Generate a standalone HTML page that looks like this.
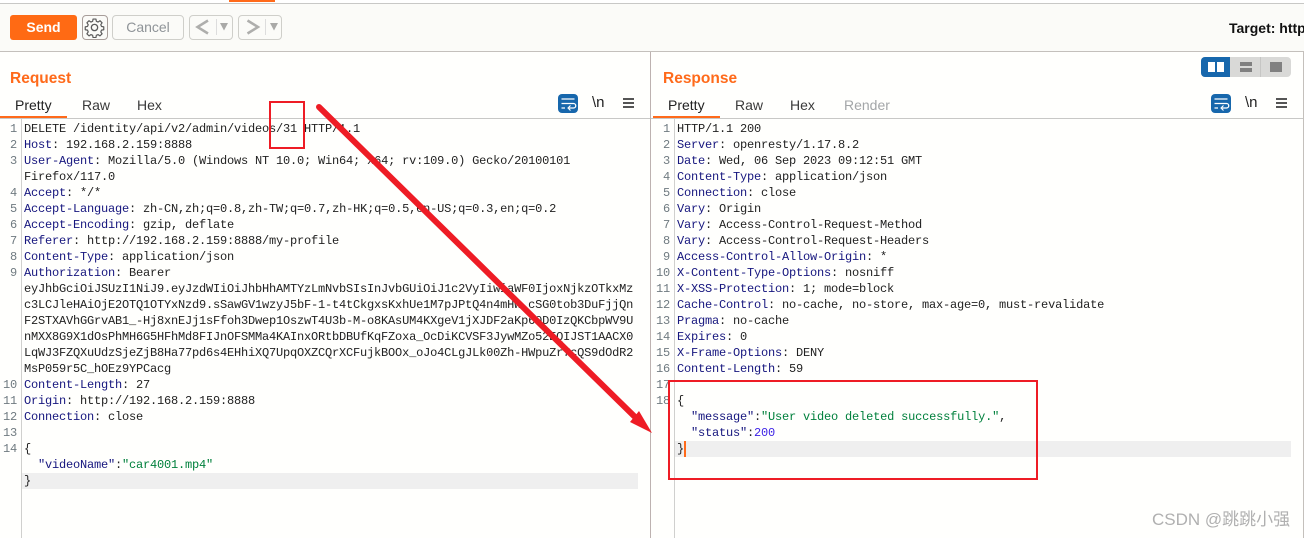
<!DOCTYPE html>
<html><head><meta charset="utf-8"><style>
html,body{margin:0;padding:0}
body{width:1304px;height:538px;overflow:hidden;background:#fffffd;position:relative;font-family:"Liberation Sans",sans-serif}
.a{position:absolute}
.l{position:absolute;font:12px/16px "Liberation Mono","Noto Sans CJK SC",monospace;letter-spacing:-.2px;color:#222;white-space:pre;height:16px}
.n{position:absolute;font:12px/16px "Liberation Mono",monospace;letter-spacing:-.2px;color:#6f7a80;text-align:right;width:16px}
.k{color:#16167e}.s{color:#00803c}.d{color:#3a1fe6}
.tab{position:absolute;top:97px;font-size:14px;line-height:17px;color:#3a3a3a}
.h{position:absolute;top:70px;font-size:15.5px;font-weight:bold;line-height:18px;color:#ff6a1a}
.b{position:absolute;top:15px;height:23px;border:1px solid #cfcfca;border-radius:4px;box-sizing:content-box}
</style></head><body>
<div class="a" style="left:0;top:0;width:1304px;height:51px;background:#fbfbf8"></div>
<div class="a" style="left:0;top:0;width:1304px;height:3px;background:#fff"></div>
<div class="a" style="left:0;top:3px;width:1304px;height:1px;background:#c8c8c6"></div>
<div class="a" style="left:229px;top:0;width:46px;height:2px;background:#ff6a1a"></div>
<div class="a" style="left:0;top:51px;width:1304px;height:1px;background:#c4c0bc"></div>
<div class="a" style="left:1303px;top:52px;width:1px;height:486px;background:#c4c0bc"></div>
<div class="a" style="left:650px;top:52px;width:1px;height:486px;background:#bdb2b0"></div>

<div class="a" style="left:10px;top:15px;width:67px;height:25px;background:#ff6a14;border-radius:3px;color:#fff;font-size:14px;font-weight:bold;text-align:center;line-height:25px">Send</div>
<div class="b" style="left:82px;width:24px;border-color:#a89e9a"></div>
<svg class="a" style="left:84px;top:17px" width="21" height="21" viewBox="0 0 24 24" fill="none" stroke="#5a5a5a" stroke-width="1.500" stroke-linejoin="round"><circle cx="12" cy="12" r="3.600"/><path d="M10.200 2.500h3.600l.5 2.800 2.200.9 2.300-1.600 2.600 2.600-1.600 2.300.9 2.200 2.800.5v3.600l-2.800.5-.9 2.200 1.600 2.300-2.600 2.600-2.300-1.600-2.200.9-.5 2.800h-3.600l-.5-2.800-2.200-.9-2.300 1.600-2.600-2.600 1.600-2.300-.9-2.200-2.800-.5v-3.600l2.800-.5.9-2.200-1.600-2.300 2.600-2.600 2.300 1.600 2.200-.9z" transform="translate(12 12) scale(.92) translate(-12 -13)"/></svg>
<div class="b" style="left:112px;width:70px;color:#8f9498;font-size:14px;line-height:23px;text-align:center">Cancel</div>
<div class="b" style="left:189px;width:42px"></div>
<div class="b" style="left:238px;width:42px"></div>
<svg class="a" style="left:189px;top:15px" width="96" height="25" fill="none"><path d="M19 5.500L8.500 12 19 18.500" stroke="#aeaeac" stroke-width="2.500"/><rect x="27" y="4" width="1" height="16" fill="#ddd"/><path d="M31 8h8l-4 7.500z" fill="#a9a9a7"/><path d="M58.500 5.500L69 12 58.500 18.500" stroke="#aeaeac" stroke-width="2.500"/><rect x="76" y="4" width="1" height="16" fill="#ddd"/><path d="M81 8h8l-4 7.500z" fill="#a9a9a7"/></svg>
<div class="a" style="left:1229px;top:20px;font-size:14px;font-weight:bold;line-height:17px;color:#111;white-space:nowrap;width:75px;overflow:hidden">Target: http://192</div>

<div class="h" style="left:10px">Request</div>
<div class="h" style="left:663px">Response</div>

<div class="a" style="left:0;top:118px;width:650px;height:1px;background:#c8c8c6"></div>
<div class="a" style="left:651px;top:118px;width:652px;height:1px;background:#c8c8c6"></div>
<div class="a" style="left:0;top:116px;width:67px;height:2px;background:#ff6a1a"></div>
<div class="a" style="left:653px;top:116px;width:67px;height:2px;background:#ff6a1a"></div>
<div class="tab" style="left:15px;color:#222">Pretty</div>
<div class="tab" style="left:82px">Raw</div>
<div class="tab" style="left:137px">Hex</div>
<div class="tab" style="left:668px;color:#222">Pretty</div>
<div class="tab" style="left:735px">Raw</div>
<div class="tab" style="left:790px">Hex</div>
<div class="tab" style="left:844px;color:#a3a6a8">Render</div>

<div class="a" style="left:1201px;top:57px;width:90px;height:20px;background:#d9d9d7;border-radius:4px"></div>
<div class="a" style="left:1201px;top:57px;width:29px;height:20px;background:#1767ac;border-radius:4px 0 0 4px"></div>
<div class="a" style="left:1260px;top:57px;width:1px;height:20px;background:#c6c6c4"></div>
<div class="a" style="left:1208px;top:62px;width:7px;height:10px;background:#fff"></div>
<div class="a" style="left:1217px;top:62px;width:7px;height:10px;background:#fff"></div>
<div class="a" style="left:1240px;top:62px;width:12px;height:4px;background:#808080"></div>
<div class="a" style="left:1240px;top:68px;width:12px;height:4px;background:#808080"></div>
<div class="a" style="left:1270px;top:62px;width:12px;height:10px;background:#808080"></div>

<svg class="a" style="left:558px;top:94px" width="20" height="19" fill="none"><rect width="20" height="19" rx="4" fill="#1767ac"/><path d="M3.500 5H16.500M3.500 9.500H15.500a2 2 0 0 1 0 4.500H11M3.500 14H7" stroke="#fff" stroke-width="1.300"/><path d="M12.500 11.500L10 14l2.500 2.500" stroke="#fff" stroke-width="1.100"/></svg>
<div class="a" style="left:592px;top:94px;font-size:15px;line-height:17px;color:#222">\n</div>
<div class="a" style="left:623px;top:98px;width:11px;height:2px;background:#555;box-shadow:0 4px 0 #555,0 8px 0 #555"></div>
<svg class="a" style="left:1211px;top:94px" width="20" height="19" fill="none"><rect width="20" height="19" rx="4" fill="#1767ac"/><path d="M3.500 5H16.500M3.500 9.500H15.500a2 2 0 0 1 0 4.500H11M3.500 14H7" stroke="#fff" stroke-width="1.300"/><path d="M12.500 11.500L10 14l2.500 2.500" stroke="#fff" stroke-width="1.100"/></svg>
<div class="a" style="left:1245px;top:94px;font-size:15px;line-height:17px;color:#222">\n</div>
<div class="a" style="left:1276px;top:98px;width:11px;height:2px;background:#555;box-shadow:0 4px 0 #555,0 8px 0 #555"></div>

<div class="a" style="left:21px;top:119px;width:1px;height:419px;background:#d0d0ce"></div>
<div class="a" style="left:674px;top:119px;width:1px;height:419px;background:#d0d0ce"></div>
<div class="a" style="left:22px;top:473px;width:616px;height:16px;background:#efefef"></div>
<div class="a" style="left:675px;top:441px;width:616px;height:16px;background:#efefef"></div>
<div class="a" style="left:684px;top:441px;width:2px;height:16px;background:#ff6a1a"></div>

<div class="n" style="left:1px;top:121px">1</div><div class="l" style="left:24px;top:121px">DELETE /identity/api/v2/admin/videos/31 HTTP/1.1</div>
<div class="n" style="left:1px;top:137px">2</div><div class="l" style="left:24px;top:137px"><span class="k">Host</span>: 192.168.2.159:8888</div>
<div class="n" style="left:1px;top:153px">3</div><div class="l" style="left:24px;top:153px"><span class="k">User-Agent</span>: Mozilla/5.0 (Windows NT 10.0; Win64; x64; rv:109.0) Gecko/20100101</div>
<div class="l" style="left:24px;top:169px">Firefox/117.0</div>
<div class="n" style="left:1px;top:185px">4</div><div class="l" style="left:24px;top:185px"><span class="k">Accept</span>: */*</div>
<div class="n" style="left:1px;top:201px">5</div><div class="l" style="left:24px;top:201px"><span class="k">Accept-Language</span>: zh-CN,zh;q=0.8,zh-TW;q=0.7,zh-HK;q=0.5,en-US;q=0.3,en;q=0.2</div>
<div class="n" style="left:1px;top:217px">6</div><div class="l" style="left:24px;top:217px"><span class="k">Accept-Encoding</span>: gzip, deflate</div>
<div class="n" style="left:1px;top:233px">7</div><div class="l" style="left:24px;top:233px"><span class="k">Referer</span>: http://192.168.2.159:8888/my-profile</div>
<div class="n" style="left:1px;top:249px">8</div><div class="l" style="left:24px;top:249px"><span class="k">Content-Type</span>: application/json</div>
<div class="n" style="left:1px;top:265px">9</div><div class="l" style="left:24px;top:265px"><span class="k">Authorization</span>: Bearer</div>
<div class="l" style="left:24px;top:281px">eyJhbGciOiJSUzI1NiJ9.eyJzdWIiOiJhbHhAMTYzLmNvbSIsInJvbGUiOiJ1c2VyIiwiaWF0IjoxNjkzOTkxMz</div>
<div class="l" style="left:24px;top:297px">c3LCJleHAiOjE2OTQ1OTYxNzd9.sSawGV1wzyJ5bF-1-t4tCkgxsKxhUe1M7pJPtQ4n4mHw_cSG0tob3DuFjjQn</div>
<div class="l" style="left:24px;top:313px">F2STXAVhGGrvAB1_-Hj8xnEJj1sFfoh3Dwep1OszwT4U3b-M-o8KAsUM4KXgeV1jXJDF2aKp60D0IzQKCbpWV9U</div>
<div class="l" style="left:24px;top:329px">nMXX8G9X1dOsPhMH6G5HFhMd8FIJnOFSMMa4KAInxORtbDBUfKqFZoxa_OcDiKCVSF3JywMZo52EQIJST1AACX0</div>
<div class="l" style="left:24px;top:345px">LqWJ3FZQXuUdzSjeZjB8Ha77pd6s4EHhiXQ7UpqOXZCQrXCFujkBOOx_oJo4CLgJLk00Zh-HWpuZr7cQS9dOdR2</div>
<div class="l" style="left:24px;top:361px">MsP059r5C_hOEz9YPCacg</div>
<div class="n" style="left:1px;top:377px">10</div><div class="l" style="left:24px;top:377px"><span class="k">Content-Length</span>: 27</div>
<div class="n" style="left:1px;top:393px">11</div><div class="l" style="left:24px;top:393px"><span class="k">Origin</span>: http://192.168.2.159:8888</div>
<div class="n" style="left:1px;top:409px">12</div><div class="l" style="left:24px;top:409px"><span class="k">Connection</span>: close</div>
<div class="n" style="left:1px;top:425px">13</div>
<div class="n" style="left:1px;top:441px">14</div><div class="l" style="left:24px;top:441px">{</div>
<div class="l" style="left:24px;top:457px">  <span class="k">"videoName"</span>:<span class="s">"car4001.mp4"</span></div>
<div class="l" style="left:24px;top:473px">}</div>

<div class="n" style="left:654px;top:121px">1</div><div class="l" style="left:677px;top:121px">HTTP/1.1 200</div>
<div class="n" style="left:654px;top:137px">2</div><div class="l" style="left:677px;top:137px"><span class="k">Server</span>: openresty/1.17.8.2</div>
<div class="n" style="left:654px;top:153px">3</div><div class="l" style="left:677px;top:153px"><span class="k">Date</span>: Wed, 06 Sep 2023 09:12:51 GMT</div>
<div class="n" style="left:654px;top:169px">4</div><div class="l" style="left:677px;top:169px"><span class="k">Content-Type</span>: application/json</div>
<div class="n" style="left:654px;top:185px">5</div><div class="l" style="left:677px;top:185px"><span class="k">Connection</span>: close</div>
<div class="n" style="left:654px;top:201px">6</div><div class="l" style="left:677px;top:201px"><span class="k">Vary</span>: Origin</div>
<div class="n" style="left:654px;top:217px">7</div><div class="l" style="left:677px;top:217px"><span class="k">Vary</span>: Access-Control-Request-Method</div>
<div class="n" style="left:654px;top:233px">8</div><div class="l" style="left:677px;top:233px"><span class="k">Vary</span>: Access-Control-Request-Headers</div>
<div class="n" style="left:654px;top:249px">9</div><div class="l" style="left:677px;top:249px"><span class="k">Access-Control-Allow-Origin</span>: *</div>
<div class="n" style="left:654px;top:265px">10</div><div class="l" style="left:677px;top:265px"><span class="k">X-Content-Type-Options</span>: nosniff</div>
<div class="n" style="left:654px;top:281px">11</div><div class="l" style="left:677px;top:281px"><span class="k">X-XSS-Protection</span>: 1; mode=block</div>
<div class="n" style="left:654px;top:297px">12</div><div class="l" style="left:677px;top:297px"><span class="k">Cache-Control</span>: no-cache, no-store, max-age=0, must-revalidate</div>
<div class="n" style="left:654px;top:313px">13</div><div class="l" style="left:677px;top:313px"><span class="k">Pragma</span>: no-cache</div>
<div class="n" style="left:654px;top:329px">14</div><div class="l" style="left:677px;top:329px"><span class="k">Expires</span>: 0</div>
<div class="n" style="left:654px;top:345px">15</div><div class="l" style="left:677px;top:345px"><span class="k">X-Frame-Options</span>: DENY</div>
<div class="n" style="left:654px;top:361px">16</div><div class="l" style="left:677px;top:361px"><span class="k">Content-Length</span>: 59</div>
<div class="n" style="left:654px;top:377px">17</div>
<div class="n" style="left:654px;top:393px">18</div><div class="l" style="left:677px;top:393px">{</div>
<div class="l" style="left:677px;top:409px">  <span class="k">"message"</span>:<span class="s">"User video deleted successfully."</span>,</div>
<div class="l" style="left:677px;top:425px">  <span class="k">"status"</span>:<span class="d">200</span></div>
<div class="l" style="left:677px;top:441px">}</div>

<div class="a" style="left:269px;top:101px;width:32px;height:44px;border:2px solid #ee1c25"></div>
<div class="a" style="left:668px;top:380px;width:366px;height:96px;border:2px solid #ee1c25"></div>
<svg class="a" style="left:0;top:0" width="1304" height="538"><path d="M319 107L635 417" stroke="#ee1c25" stroke-width="6" stroke-linecap="round" fill="none"/><path d="M652 433L639 411 630 422z" fill="#ee1c25"/></svg>
<div class="a" style="left:1152px;top:510px;font:17px/20px 'Liberation Sans','Noto Sans CJK SC',sans-serif;color:#b0b0b0;white-space:nowrap">CSDN @跳跳小强</div>
</body></html>
